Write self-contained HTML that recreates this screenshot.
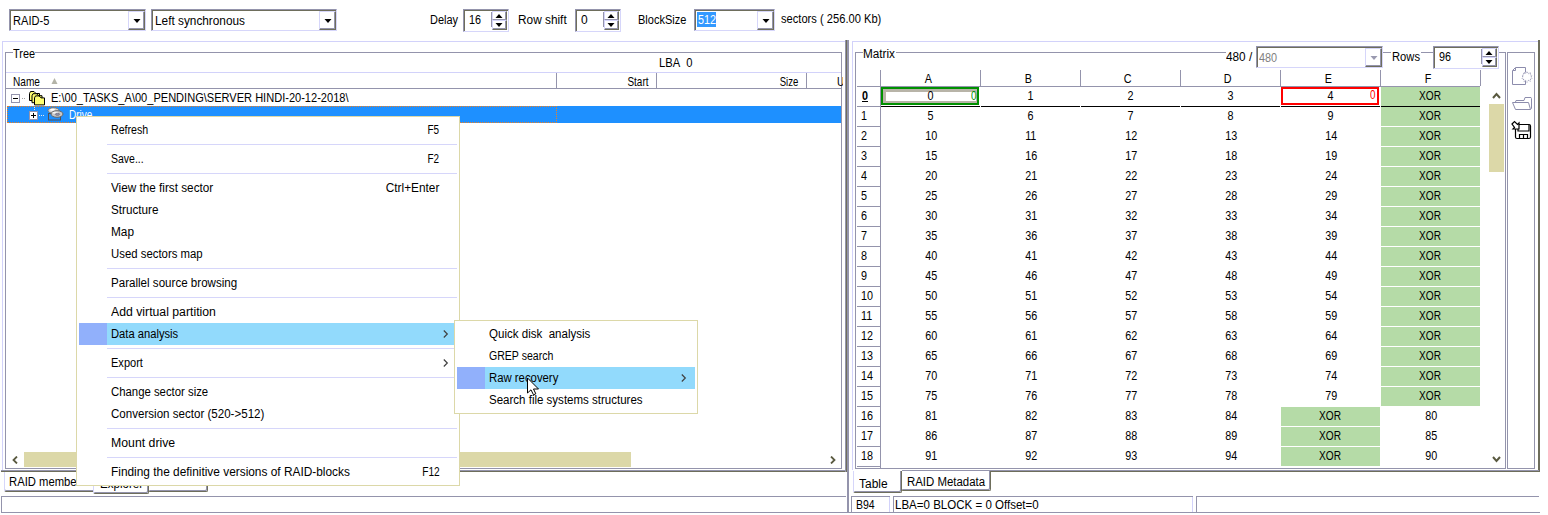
<!DOCTYPE html><html><head><meta charset="utf-8"><title>RAID</title><style>
*{box-sizing:border-box;margin:0;padding:0}
html,body{width:1548px;height:515px;overflow:hidden;background:#fff}
body{position:relative;font-family:"Liberation Sans",sans-serif;font-size:12px;color:#000}
.a{position:absolute}
.t{position:absolute;white-space:nowrap;line-height:16px;height:16px;font-size:12px}
.sm{font-size:13px}
.sunk{position:absolute;background:#fff;border-style:solid;border-width:1px;border-color:#9494ac #d6d6fa #d6d6fa #9494ac;box-shadow:inset 1px 1px 0 #6e6e5c}
.btn{position:absolute;background:#fff;border-style:solid;border-width:1px;border-color:#d6d6fa #6e6e5c #6e6e5c #d6d6fa;box-shadow:inset -1px -1px 0 #9494ac}
.lav{background:#d2d2fa}
.gry{background:#9494ac}
.dk{background:#6e6e5c}
.xor{background:#b5dba7}
.mi{position:absolute;white-space:nowrap;font-size:12px;line-height:22px;height:22px}
.sep{position:absolute;height:1px;background:#d6d6fa}
.c{position:absolute;width:100px;height:20px;line-height:19px;text-align:center;font-size:13px;padding-left:2px}
.c i,.rh i{font-style:normal;display:inline-block;transform:scaleX(.83)}
.rh i{transform-origin:left center}
.rh{position:absolute;left:857px;width:23px;height:20px;line-height:19px;font-size:13px;padding-left:4px}
</style></head><body>
<div class="sunk" style="left:9px;top:9px;width:137px;height:22px"></div>
<div class="btn" style="left:128px;top:11px;width:17px;height:19px"></div>
<svg class="a" style="left:132.5px;top:19px" width="8" height="4"><polygon points="0.5,0 7.5,0 4,4" fill="#000"/></svg>
<div class="t " style="left:13px;top:13px;"><span style="display:inline-block;transform-origin:left center;transform:scaleX(0.9226)">RAID-5</span></div>
<div class="sunk" style="left:151px;top:9px;width:186px;height:22px"></div>
<div class="btn" style="left:319px;top:11px;width:17px;height:19px"></div>
<svg class="a" style="left:323.5px;top:19px" width="8" height="4"><polygon points="0.5,0 7.5,0 4,4" fill="#000"/></svg>
<div class="t " style="left:155px;top:13px;"><span style="display:inline-block;transform-origin:left center;transform:scaleX(0.9848)">Left synchronous</span></div>
<div class="t " style="left:430px;top:12px;"><span style="display:inline-block;transform-origin:left center;transform:scaleX(0.9124)">Delay</span></div>
<div class="sunk" style="left:463px;top:9px;width:46px;height:23px"></div>
<div class="a gry" style="left:491px;top:12px;width:1px;height:15px;"></div>
<div class="btn" style="left:492px;top:11px;width:15px;height:9px;border-bottom-color:#9494ac;box-shadow:inset -1px 0 0 #9494ac"></div>
<div class="btn" style="left:492px;top:20px;width:15px;height:10px"></div>
<svg class="a" style="left:495px;top:14px" width="8" height="4"><polygon points="0.5,4 7.5,4 4,0" fill="#000"/></svg>
<svg class="a" style="left:495px;top:23px" width="8" height="4"><polygon points="0.5,0 7.5,0 4,4" fill="#000"/></svg>
<div class="t " style="left:469px;top:12px;"><span style="display:inline-block;transform-origin:left center;transform:scaleX(0.8982)">16</span></div>
<div class="t " style="left:518px;top:12px;"><span style="display:inline-block;transform-origin:left center;transform:scaleX(0.9866)">Row shift</span></div>
<div class="sunk" style="left:575px;top:9px;width:46px;height:23px"></div>
<div class="a gry" style="left:603px;top:12px;width:1px;height:15px;"></div>
<div class="btn" style="left:604px;top:11px;width:15px;height:9px;border-bottom-color:#9494ac;box-shadow:inset -1px 0 0 #9494ac"></div>
<div class="btn" style="left:604px;top:20px;width:15px;height:10px"></div>
<svg class="a" style="left:607px;top:14px" width="8" height="4"><polygon points="0.5,4 7.5,4 4,0" fill="#000"/></svg>
<svg class="a" style="left:607px;top:23px" width="8" height="4"><polygon points="0.5,0 7.5,0 4,4" fill="#000"/></svg>
<div class="t " style="left:581px;top:12px;">0</div>
<div class="t " style="left:638px;top:12px;"><span style="display:inline-block;transform-origin:left center;transform:scaleX(0.9167)">BlockSize</span></div>
<div class="sunk" style="left:694px;top:9px;width:81px;height:22px"></div>
<div class="btn" style="left:757px;top:11px;width:17px;height:19px"></div>
<svg class="a" style="left:761.5px;top:19px" width="8" height="4"><polygon points="0.5,0 7.5,0 4,4" fill="#000"/></svg>
<div class="a " style="left:697px;top:12px;width:19px;height:15px;background:#3399ff"></div>
<div class="t " style="left:698px;top:12px;color:#fff"><span style="display:inline-block;transform-origin:left center;transform:scaleX(0.8986)">512</span></div>
<div class="t " style="left:781px;top:11px;"><span style="display:inline-block;transform-origin:left center;transform:scaleX(0.9282)">sectors ( 256.00 Kb)</span></div>
<div class="a lav" style="left:2px;top:41px;width:843px;height:1px;"></div>
<div class="a lav" style="left:2px;top:41px;width:1px;height:430px;"></div>
<div class="a gry" style="left:5px;top:52px;width:837px;height:1px;"></div>
<div class="a gry" style="left:5px;top:52px;width:1px;height:417px;"></div>
<div class="a gry" style="left:841px;top:52px;width:1px;height:417px;"></div>
<div class="a gry" style="left:5px;top:468px;width:837px;height:1px;"></div>
<div class="a " style="left:13px;top:52px;width:22px;height:1px;background:#fff"></div>
<div class="t " style="left:13px;top:46px;"><span style="display:inline-block;transform-origin:left center;transform:scaleX(0.9078)">Tree</span></div>
<div class="t " style="left:659px;top:55px;"><span style="display:inline-block;transform-origin:left center;transform:scaleX(0.9325)">LBA&nbsp; 0</span></div>
<div class="a lav" style="left:6px;top:72px;width:835px;height:1px;"></div>
<div class="a gry" style="left:6px;top:88px;width:835px;height:1px;"></div>
<div class="a gry" style="left:556px;top:73px;width:1px;height:15px;"></div>
<div class="a gry" style="left:656px;top:73px;width:1px;height:15px;"></div>
<div class="a gry" style="left:806px;top:73px;width:1px;height:15px;"></div>
<div class="t sm" style="left:13px;top:74px;"><span style="display:inline-block;transform-origin:left center;transform:scaleX(0.7784)">Name</span></div>
<svg class="a" style="left:51px;top:78px" width="7" height="6"><polygon points="0.5,6 3.5,0 6.5,6" fill="#b4b4a8"/></svg>
<div class="t sm" style="right:900px;top:74px;"><span style="display:inline-block;transform-origin:right center;transform:scaleX(0.7645)">Start</span></div>
<div class="t sm" style="right:750px;top:74px;"><span style="display:inline-block;transform-origin:right center;transform:scaleX(0.7353)">Size</span></div>
<div class="t sm" style="left:836.5px;top:74px;width:6px;overflow:hidden"><i style="font-style:normal;display:inline-block;transform:scaleX(.8);transform-origin:left center">U</i></div>
<svg class="a" style="left:11px;top:94px" width="15" height="9"><rect x="0.5" y="0.5" width="8" height="8" fill="#fff" stroke="#9494ac"/><rect x="2" y="4" width="5" height="1" fill="#000"/><rect x="11" y="4" width="1" height="1" fill="#a0a0a0"/><rect x="13" y="4" width="1" height="1" fill="#a0a0a0"/></svg>
<svg class="a" style="left:29px;top:91px" width="17" height="15" viewBox="0 0 17 15"><path d="M0.5 2.5L1.5 0.5H5.0L7.0 2.5H10.5V9.5H0.5Z" fill="#ffff70" stroke="#000"/><path d="M3.0 4.7L4.0 2.7H7.5L9.5 4.7H13.0V11.7H3.0Z" fill="#ffff70" stroke="#000"/><path d="M5.5 6.9L6.5 4.9H10.0L12.0 6.9H15.5V13.9H5.5Z" fill="#ffff70" stroke="#000"/></svg>
<div class="t sm" style="left:51px;top:90px;"><span style="display:inline-block;transform-origin:left center;transform:scaleX(0.8501)">E:\00_TASKS_A\00_PENDING\SERVER HINDI-20-12-2018\</span></div>
<div class="a " style="left:7px;top:106px;width:834px;height:17px;background:#1e90ff"></div>
<div class="a " style="left:7px;top:106px;width:550px;height:17px;border:1px dotted #f08020"></div>
<svg class="a" style="left:29px;top:107px" width="16" height="13"><rect x="5" y="0" width="1" height="1" fill="#e8e8e8"/><rect x="5" y="2" width="1" height="1" fill="#e8e8e8"/><rect x="0.500" y="4.500" width="8" height="8" fill="#fff" stroke="#9494ac"/><rect x="2" y="8" width="5" height="1" fill="#000"/><rect x="4" y="6" width="1" height="5" fill="#000"/><rect x="10" y="8" width="1" height="1" fill="#e8e8e8"/><rect x="12" y="8" width="1" height="1" fill="#e8e8e8"/><rect x="14" y="8" width="1" height="1" fill="#e8e8e8"/></svg>
<svg class="a" style="left:47px;top:107px" width="17" height="14" viewBox="0 0 17 14"><rect x="1.500" y="6.500" width="12" height="6.500" fill="none" stroke="#505058"/><ellipse cx="6.500" cy="3.500" rx="5.500" ry="2.800" fill="#d4d4d4" stroke="#787878"/><ellipse cx="5.500" cy="2.800" rx="2.500" ry="1" fill="#fff"/><ellipse cx="10" cy="7" rx="6" ry="3.300" fill="#c8c8c8" stroke="#686868"/><ellipse cx="8.500" cy="5.800" rx="3" ry="1" fill="#f4f4f4"/><ellipse cx="10.500" cy="7.300" rx="2.200" ry="1.100" fill="#9090a8" stroke="#606070" stroke-width="0.600"/></svg>
<div class="t sm" style="left:69px;top:107px;color:#fff"><span style="display:inline-block;transform-origin:left center;transform:scaleX(0.7679)">Drive</span></div>
<div class="a " style="left:24px;top:452px;width:607px;height:15px;background:#dcd8a8"></div>
<svg class="a" style="left:11px;top:456px" width="8" height="8"><path d="M6 0.500L2.500 4L6 7.500" fill="none" stroke="#5a5a40" stroke-width="1.800"/></svg>
<svg class="a" style="left:829px;top:456px" width="8" height="8"><path d="M2 0.500L5.500 4L2 7.500" fill="none" stroke="#5a5a40" stroke-width="1.800"/></svg>
<div class="a gry" style="left:1px;top:470px;width:846px;height:1px;"></div>
<div class="a dk" style="left:1px;top:471px;width:846px;height:1px;"></div>
<div class="a" style="left:4px;top:472px;width:89px;height:20px;background:#fff;border-style:solid;border-color:#d6d6fa #6e6e5c #6e6e5c #d6d6fa;border-width:0 0px 1px 1px;box-shadow:inset 0px -1px 0 #9494ac;border-radius:0 0 0px 2px"></div>
<div class="t " style="left:9px;top:474px;"><span style="display:inline-block;transform-origin:left center;transform:scaleX(0.9388)">RAID members</span></div>
<div class="a" style="left:148px;top:472px;width:60px;height:20px;background:#fff;border-style:solid;border-color:#d6d6fa #6e6e5c #6e6e5c #d6d6fa;border-width:0 1px 1px 1px;box-shadow:inset -1px -1px 0 #9494ac;border-radius:0 0 2px 2px"></div>
<div class="a" style="left:93px;top:472px;width:56px;height:22px;background:#fff;border-style:solid;border-color:#d6d6fa #6e6e5c #6e6e5c #d6d6fa;border-width:0 1px 1px 1px;box-shadow:inset -1px -1px 0 #9494ac;border-radius:0 0 2px 2px"></div>
<div class="t " style="left:100px;top:476px;"><span style="display:inline-block;transform-origin:left center;transform:scaleX(0.9622)">Explorer</span></div>
<div class="a gry" style="left:1px;top:496px;width:845px;height:1px;"></div>
<div class="a gry" style="left:1px;top:496px;width:1px;height:17px;"></div>
<div class="a gry" style="left:1px;top:512px;width:848px;height:1px;"></div>
<div class="a gry" style="left:845px;top:40px;width:1px;height:432px;"></div>
<div class="a dk" style="left:846px;top:40px;width:1px;height:432px;"></div>
<div class="a gry" style="left:847px;top:40px;width:2px;height:473px;"></div>
<div class="a lav" style="left:852px;top:41px;width:687px;height:1px;"></div>
<div class="a lav" style="left:852px;top:41px;width:1px;height:429px;"></div>
<div class="a dk" style="left:1538px;top:40px;width:2px;height:432px;"></div>
<div class="a gry" style="left:855px;top:52px;width:651px;height:1px;"></div>
<div class="a gry" style="left:855px;top:52px;width:1px;height:417px;"></div>
<div class="a gry" style="left:1505px;top:52px;width:1px;height:417px;"></div>
<div class="a gry" style="left:855px;top:468px;width:651px;height:1px;"></div>
<div class="a " style="left:863px;top:52px;width:33px;height:1px;background:#fff"></div>
<div class="t " style="left:863px;top:46px;"><span style="display:inline-block;transform-origin:left center;transform:scaleX(0.9794)">Matrix</span></div>
<div class="a gry" style="left:1507px;top:52px;width:28px;height:1px;"></div>
<div class="a gry" style="left:1507px;top:52px;width:1px;height:417px;"></div>
<div class="a gry" style="left:1534px;top:52px;width:1px;height:417px;"></div>
<div class="a gry" style="left:1507px;top:468px;width:28px;height:1px;"></div>
<div class="a " style="left:1226px;top:52px;width:30px;height:1px;background:#fff"></div>
<div class="t " style="left:1226px;top:49px;"><span style="display:inline-block;transform-origin:left center;transform:scaleX(0.9812)">480 /</span></div>
<div class="sunk" style="left:1256px;top:46px;width:127px;height:22px"></div>
<div class="btn" style="left:1365px;top:48px;width:17px;height:19px"></div>
<svg class="a" style="left:1369.5px;top:56px" width="8" height="4"><polygon points="0.5,0 7.5,0 4,4" fill="#9a9ab0"/></svg>
<div class="t " style="left:1259px;top:50px;color:#808080"><span style="display:inline-block;transform-origin:left center;transform:scaleX(0.9036)">480</span></div>
<div class="a " style="left:1391px;top:52px;width:30px;height:1px;background:#fff"></div>
<div class="t " style="left:1392px;top:49px;"><span style="display:inline-block;transform-origin:left center;transform:scaleX(0.9328)">Rows</span></div>
<div class="sunk" style="left:1433px;top:46px;width:66px;height:23px"></div>
<div class="a gry" style="left:1481px;top:49px;width:1px;height:15px;"></div>
<div class="btn" style="left:1482px;top:48px;width:15px;height:9px;border-bottom-color:#9494ac;box-shadow:inset -1px 0 0 #9494ac"></div>
<div class="btn" style="left:1482px;top:57px;width:15px;height:10px"></div>
<svg class="a" style="left:1485px;top:51px" width="8" height="4"><polygon points="0.5,4 7.5,4 4,0" fill="#000"/></svg>
<svg class="a" style="left:1485px;top:60px" width="8" height="4"><polygon points="0.5,0 7.5,0 4,4" fill="#000"/></svg>
<div class="t " style="left:1439px;top:49px;"><span style="display:inline-block;transform-origin:left center;transform:scaleX(0.8982)">96</span></div>
<div class="a gry" style="left:880px;top:70px;width:1px;height:16px;"></div>
<div class="c" style="left:880px;top:70px;height:16px;line-height:18px;padding:0 4px 0 0"><i>A</i></div>
<div class="a gry" style="left:980px;top:70px;width:1px;height:16px;"></div>
<div class="c" style="left:980px;top:70px;height:16px;line-height:18px;padding:0 4px 0 0"><i>B</i></div>
<div class="a gry" style="left:1080px;top:70px;width:1px;height:16px;"></div>
<div class="c" style="left:1080px;top:70px;height:16px;line-height:18px;padding:0 4px 0 0"><i>C</i></div>
<div class="a gry" style="left:1180px;top:70px;width:1px;height:16px;"></div>
<div class="c" style="left:1180px;top:70px;height:16px;line-height:18px;padding:0 4px 0 0"><i>D</i></div>
<div class="a gry" style="left:1280px;top:70px;width:1px;height:16px;"></div>
<div class="c" style="left:1280px;top:70px;height:16px;line-height:18px;padding:0 4px 0 0"><i>E</i></div>
<div class="a gry" style="left:1380px;top:70px;width:1px;height:16px;"></div>
<div class="c" style="left:1380px;top:70px;height:16px;line-height:18px;padding:0 4px 0 0"><i>F</i></div>
<div class="a gry" style="left:1480px;top:70px;width:1px;height:16px;"></div>
<div class="a gry" style="left:857px;top:86px;width:623px;height:1px;"></div>
<div class="a gry" style="left:880px;top:86px;width:1px;height:382px;"></div>
<div class="rh" style="top:86px"><b><i style="text-decoration:underline;margin-left:1px">0</i></b></div>
<div class="a gry" style="left:857px;top:106px;width:23px;height:1px;"></div>
<div class="c" style="left:880px;top:86px"><i>0</i></div>
<div class="c" style="left:980px;top:86px"><i>1</i></div>
<div class="c" style="left:1080px;top:86px"><i>2</i></div>
<div class="c" style="left:1180px;top:86px"><i>3</i></div>
<div class="c" style="left:1280px;top:86px"><i>4</i></div>
<div class="c xor" style="left:1381px;top:87px;width:99px;padding:0 1px 0 0;height:19px;line-height:18px"><span style="display:inline-block;transform-origin:center center;transform:scaleX(0.7809)">XOR</span></div>
<div class="rh" style="top:106px"><i>1</i></div>
<div class="a gry" style="left:857px;top:126px;width:23px;height:1px;"></div>
<div class="c" style="left:880px;top:106px"><i>5</i></div>
<div class="c" style="left:980px;top:106px"><i>6</i></div>
<div class="c" style="left:1080px;top:106px"><i>7</i></div>
<div class="c" style="left:1180px;top:106px"><i>8</i></div>
<div class="c" style="left:1280px;top:106px"><i>9</i></div>
<div class="c xor" style="left:1381px;top:107px;width:99px;padding:0 1px 0 0;height:19px;line-height:18px"><span style="display:inline-block;transform-origin:center center;transform:scaleX(0.7809)">XOR</span></div>
<div class="rh" style="top:126px"><i>2</i></div>
<div class="a gry" style="left:857px;top:146px;width:23px;height:1px;"></div>
<div class="c" style="left:880px;top:126px"><i>10</i></div>
<div class="c" style="left:980px;top:126px"><i>11</i></div>
<div class="c" style="left:1080px;top:126px"><i>12</i></div>
<div class="c" style="left:1180px;top:126px"><i>13</i></div>
<div class="c" style="left:1280px;top:126px"><i>14</i></div>
<div class="c xor" style="left:1381px;top:127px;width:99px;padding:0 1px 0 0;height:19px;line-height:18px"><span style="display:inline-block;transform-origin:center center;transform:scaleX(0.7809)">XOR</span></div>
<div class="rh" style="top:146px"><i>3</i></div>
<div class="a gry" style="left:857px;top:166px;width:23px;height:1px;"></div>
<div class="c" style="left:880px;top:146px"><i>15</i></div>
<div class="c" style="left:980px;top:146px"><i>16</i></div>
<div class="c" style="left:1080px;top:146px"><i>17</i></div>
<div class="c" style="left:1180px;top:146px"><i>18</i></div>
<div class="c" style="left:1280px;top:146px"><i>19</i></div>
<div class="c xor" style="left:1381px;top:147px;width:99px;padding:0 1px 0 0;height:19px;line-height:18px"><span style="display:inline-block;transform-origin:center center;transform:scaleX(0.7809)">XOR</span></div>
<div class="rh" style="top:166px"><i>4</i></div>
<div class="a gry" style="left:857px;top:186px;width:23px;height:1px;"></div>
<div class="c" style="left:880px;top:166px"><i>20</i></div>
<div class="c" style="left:980px;top:166px"><i>21</i></div>
<div class="c" style="left:1080px;top:166px"><i>22</i></div>
<div class="c" style="left:1180px;top:166px"><i>23</i></div>
<div class="c" style="left:1280px;top:166px"><i>24</i></div>
<div class="c xor" style="left:1381px;top:167px;width:99px;padding:0 1px 0 0;height:19px;line-height:18px"><span style="display:inline-block;transform-origin:center center;transform:scaleX(0.7809)">XOR</span></div>
<div class="rh" style="top:186px"><i>5</i></div>
<div class="a gry" style="left:857px;top:206px;width:23px;height:1px;"></div>
<div class="c" style="left:880px;top:186px"><i>25</i></div>
<div class="c" style="left:980px;top:186px"><i>26</i></div>
<div class="c" style="left:1080px;top:186px"><i>27</i></div>
<div class="c" style="left:1180px;top:186px"><i>28</i></div>
<div class="c" style="left:1280px;top:186px"><i>29</i></div>
<div class="c xor" style="left:1381px;top:187px;width:99px;padding:0 1px 0 0;height:19px;line-height:18px"><span style="display:inline-block;transform-origin:center center;transform:scaleX(0.7809)">XOR</span></div>
<div class="rh" style="top:206px"><i>6</i></div>
<div class="a gry" style="left:857px;top:226px;width:23px;height:1px;"></div>
<div class="c" style="left:880px;top:206px"><i>30</i></div>
<div class="c" style="left:980px;top:206px"><i>31</i></div>
<div class="c" style="left:1080px;top:206px"><i>32</i></div>
<div class="c" style="left:1180px;top:206px"><i>33</i></div>
<div class="c" style="left:1280px;top:206px"><i>34</i></div>
<div class="c xor" style="left:1381px;top:207px;width:99px;padding:0 1px 0 0;height:19px;line-height:18px"><span style="display:inline-block;transform-origin:center center;transform:scaleX(0.7809)">XOR</span></div>
<div class="rh" style="top:226px"><i>7</i></div>
<div class="a gry" style="left:857px;top:246px;width:23px;height:1px;"></div>
<div class="c" style="left:880px;top:226px"><i>35</i></div>
<div class="c" style="left:980px;top:226px"><i>36</i></div>
<div class="c" style="left:1080px;top:226px"><i>37</i></div>
<div class="c" style="left:1180px;top:226px"><i>38</i></div>
<div class="c" style="left:1280px;top:226px"><i>39</i></div>
<div class="c xor" style="left:1381px;top:227px;width:99px;padding:0 1px 0 0;height:19px;line-height:18px"><span style="display:inline-block;transform-origin:center center;transform:scaleX(0.7809)">XOR</span></div>
<div class="rh" style="top:246px"><i>8</i></div>
<div class="a gry" style="left:857px;top:266px;width:23px;height:1px;"></div>
<div class="c" style="left:880px;top:246px"><i>40</i></div>
<div class="c" style="left:980px;top:246px"><i>41</i></div>
<div class="c" style="left:1080px;top:246px"><i>42</i></div>
<div class="c" style="left:1180px;top:246px"><i>43</i></div>
<div class="c" style="left:1280px;top:246px"><i>44</i></div>
<div class="c xor" style="left:1381px;top:247px;width:99px;padding:0 1px 0 0;height:19px;line-height:18px"><span style="display:inline-block;transform-origin:center center;transform:scaleX(0.7809)">XOR</span></div>
<div class="rh" style="top:266px"><i>9</i></div>
<div class="a gry" style="left:857px;top:286px;width:23px;height:1px;"></div>
<div class="c" style="left:880px;top:266px"><i>45</i></div>
<div class="c" style="left:980px;top:266px"><i>46</i></div>
<div class="c" style="left:1080px;top:266px"><i>47</i></div>
<div class="c" style="left:1180px;top:266px"><i>48</i></div>
<div class="c" style="left:1280px;top:266px"><i>49</i></div>
<div class="c xor" style="left:1381px;top:267px;width:99px;padding:0 1px 0 0;height:19px;line-height:18px"><span style="display:inline-block;transform-origin:center center;transform:scaleX(0.7809)">XOR</span></div>
<div class="rh" style="top:286px"><i>10</i></div>
<div class="a gry" style="left:857px;top:306px;width:23px;height:1px;"></div>
<div class="c" style="left:880px;top:286px"><i>50</i></div>
<div class="c" style="left:980px;top:286px"><i>51</i></div>
<div class="c" style="left:1080px;top:286px"><i>52</i></div>
<div class="c" style="left:1180px;top:286px"><i>53</i></div>
<div class="c" style="left:1280px;top:286px"><i>54</i></div>
<div class="c xor" style="left:1381px;top:287px;width:99px;padding:0 1px 0 0;height:19px;line-height:18px"><span style="display:inline-block;transform-origin:center center;transform:scaleX(0.7809)">XOR</span></div>
<div class="rh" style="top:306px"><i>11</i></div>
<div class="a gry" style="left:857px;top:326px;width:23px;height:1px;"></div>
<div class="c" style="left:880px;top:306px"><i>55</i></div>
<div class="c" style="left:980px;top:306px"><i>56</i></div>
<div class="c" style="left:1080px;top:306px"><i>57</i></div>
<div class="c" style="left:1180px;top:306px"><i>58</i></div>
<div class="c" style="left:1280px;top:306px"><i>59</i></div>
<div class="c xor" style="left:1381px;top:307px;width:99px;padding:0 1px 0 0;height:19px;line-height:18px"><span style="display:inline-block;transform-origin:center center;transform:scaleX(0.7809)">XOR</span></div>
<div class="rh" style="top:326px"><i>12</i></div>
<div class="a gry" style="left:857px;top:346px;width:23px;height:1px;"></div>
<div class="c" style="left:880px;top:326px"><i>60</i></div>
<div class="c" style="left:980px;top:326px"><i>61</i></div>
<div class="c" style="left:1080px;top:326px"><i>62</i></div>
<div class="c" style="left:1180px;top:326px"><i>63</i></div>
<div class="c" style="left:1280px;top:326px"><i>64</i></div>
<div class="c xor" style="left:1381px;top:327px;width:99px;padding:0 1px 0 0;height:19px;line-height:18px"><span style="display:inline-block;transform-origin:center center;transform:scaleX(0.7809)">XOR</span></div>
<div class="rh" style="top:346px"><i>13</i></div>
<div class="a gry" style="left:857px;top:366px;width:23px;height:1px;"></div>
<div class="c" style="left:880px;top:346px"><i>65</i></div>
<div class="c" style="left:980px;top:346px"><i>66</i></div>
<div class="c" style="left:1080px;top:346px"><i>67</i></div>
<div class="c" style="left:1180px;top:346px"><i>68</i></div>
<div class="c" style="left:1280px;top:346px"><i>69</i></div>
<div class="c xor" style="left:1381px;top:347px;width:99px;padding:0 1px 0 0;height:19px;line-height:18px"><span style="display:inline-block;transform-origin:center center;transform:scaleX(0.7809)">XOR</span></div>
<div class="rh" style="top:366px"><i>14</i></div>
<div class="a gry" style="left:857px;top:386px;width:23px;height:1px;"></div>
<div class="c" style="left:880px;top:366px"><i>70</i></div>
<div class="c" style="left:980px;top:366px"><i>71</i></div>
<div class="c" style="left:1080px;top:366px"><i>72</i></div>
<div class="c" style="left:1180px;top:366px"><i>73</i></div>
<div class="c" style="left:1280px;top:366px"><i>74</i></div>
<div class="c xor" style="left:1381px;top:367px;width:99px;padding:0 1px 0 0;height:19px;line-height:18px"><span style="display:inline-block;transform-origin:center center;transform:scaleX(0.7809)">XOR</span></div>
<div class="rh" style="top:386px"><i>15</i></div>
<div class="a gry" style="left:857px;top:406px;width:23px;height:1px;"></div>
<div class="c" style="left:880px;top:386px"><i>75</i></div>
<div class="c" style="left:980px;top:386px"><i>76</i></div>
<div class="c" style="left:1080px;top:386px"><i>77</i></div>
<div class="c" style="left:1180px;top:386px"><i>78</i></div>
<div class="c" style="left:1280px;top:386px"><i>79</i></div>
<div class="c xor" style="left:1381px;top:387px;width:99px;padding:0 1px 0 0;height:19px;line-height:18px"><span style="display:inline-block;transform-origin:center center;transform:scaleX(0.7809)">XOR</span></div>
<div class="rh" style="top:406px"><i>16</i></div>
<div class="a gry" style="left:857px;top:426px;width:23px;height:1px;"></div>
<div class="c" style="left:1380px;top:406px"><i>80</i></div>
<div class="c" style="left:880px;top:406px"><i>81</i></div>
<div class="c" style="left:980px;top:406px"><i>82</i></div>
<div class="c" style="left:1080px;top:406px"><i>83</i></div>
<div class="c" style="left:1180px;top:406px"><i>84</i></div>
<div class="c xor" style="left:1281px;top:407px;width:99px;padding:0 1px 0 0;height:19px;line-height:18px"><span style="display:inline-block;transform-origin:center center;transform:scaleX(0.7809)">XOR</span></div>
<div class="rh" style="top:426px"><i>17</i></div>
<div class="a gry" style="left:857px;top:446px;width:23px;height:1px;"></div>
<div class="c" style="left:1380px;top:426px"><i>85</i></div>
<div class="c" style="left:880px;top:426px"><i>86</i></div>
<div class="c" style="left:980px;top:426px"><i>87</i></div>
<div class="c" style="left:1080px;top:426px"><i>88</i></div>
<div class="c" style="left:1180px;top:426px"><i>89</i></div>
<div class="c xor" style="left:1281px;top:427px;width:99px;padding:0 1px 0 0;height:19px;line-height:18px"><span style="display:inline-block;transform-origin:center center;transform:scaleX(0.7809)">XOR</span></div>
<div class="rh" style="top:446px"><i>18</i></div>
<div class="a gry" style="left:857px;top:466px;width:23px;height:1px;"></div>
<div class="c" style="left:1380px;top:446px"><i>90</i></div>
<div class="c" style="left:880px;top:446px"><i>91</i></div>
<div class="c" style="left:980px;top:446px"><i>92</i></div>
<div class="c" style="left:1080px;top:446px"><i>93</i></div>
<div class="c" style="left:1180px;top:446px"><i>94</i></div>
<div class="c xor" style="left:1281px;top:447px;width:99px;padding:0 1px 0 0;height:19px;line-height:18px"><span style="display:inline-block;transform-origin:center center;transform:scaleX(0.7809)">XOR</span></div>
<div class="a " style="left:881px;top:106px;width:99px;height:1px;background:#000"></div>
<div class="a " style="left:981px;top:106px;width:99px;height:1px;background:#000"></div>
<div class="a " style="left:1081px;top:106px;width:99px;height:1px;background:#000"></div>
<div class="a " style="left:1181px;top:106px;width:99px;height:1px;background:#000"></div>
<div class="a " style="left:1281px;top:106px;width:99px;height:1px;background:#000"></div>
<div class="a " style="left:1381px;top:106px;width:99px;height:1px;background:#000"></div>
<div class="a " style="left:881px;top:87px;width:98px;height:18px;border:2px solid #009000;background:#fff"></div>
<div class="a " style="left:883px;top:89px;width:94px;height:14px;border-style:solid;border-color:#b8b4a8;border-width:3px 1px 2px 3px"></div>
<div class="c" style="left:880px;top:86px"><i>0</i></div>
<div class="t sm" style="left:971px;top:88px;color:#009000"><span style="display:inline-block;transform-origin:left center;transform:scaleX(0.7603)">0</span></div>
<div class="a " style="left:1281px;top:87px;width:98px;height:18px;border:2px solid #f00;background:#fff"></div>
<div class="c" style="left:1280px;top:86px"><i>4</i></div>
<div class="t sm" style="left:1370px;top:87px;color:#f00"><span style="display:inline-block;transform-origin:left center;transform:scaleX(0.7603)">0</span></div>
<div class="a " style="left:1489px;top:104px;width:15px;height:68px;background:#dcd8a8"></div>
<svg class="a" style="left:1492px;top:92px" width="9" height="7"><path d="M1 6L4.500 2L8 6" fill="none" stroke="#5a5a40" stroke-width="2"/></svg>
<svg class="a" style="left:1492px;top:456px" width="9" height="7"><path d="M1 1L4.500 5L8 1" fill="none" stroke="#5a5a40" stroke-width="2"/></svg>
<div class="a gry" style="left:902px;top:470px;width:637px;height:1px;"></div>
<div class="a dk" style="left:902px;top:471px;width:637px;height:1px;"></div>
<svg class="a" style="left:1511px;top:66px" width="23" height="20" viewBox="0 0 23 20" fill="none" stroke="#8c8cac"><path d="M4.500 1.500H14.500V6.500M14.500 15V18.500H1.500V4.500L4.500 1.500M2 4.500H4.500V2"/><path d="M13 6.500l1.500 1.200 1.500-2 1.500 2 1.800-1 .2 2.300 1.500 .5-1 1.500 1 1.500-1.500 .5-.2 2.300-1.800-1-1.500 2-1.500-2-1.500 1.200-.5-2.500-1.500-.5 1-1.500-1-1.500 1.500-.5z" stroke-width="0.900" stroke-dasharray="1.300 0.900"/></svg>
<svg class="a" style="left:1511px;top:96px" width="23" height="15" viewBox="0 0 23 15" fill="none" stroke="#8c8cac"><path d="M1.500 6.500H17.500L19.500 13.500H4.500Z"/><path d="M4.500 6L5 4.500H13L14 1.500H20L20.500 2.500V12.500L19.500 13.500"/></svg>
<svg class="a" style="left:1511px;top:120px" width="23" height="20" viewBox="0 0 23 20" fill="none" stroke="#000" stroke-width="1.200"><rect x="4.500" y="4.500" width="15" height="14" rx="1.500"/><path d="M7 4.500V11H18V4.500"/><path d="M8.500 18.500V14.500H16.500V18.500M12.500 14.500V18.500"/><path d="M1 4L3.500 1.500L6.500 4.500L8 3V9H2L3.500 7.500Z" fill="#fff"/></svg>
<div class="a" style="left:901px;top:471px;width:90px;height:20px;background:#fff;border-style:solid;border-color:#d6d6fa #6e6e5c #6e6e5c #6e6e5c;border-width:0 1px 1px 1px;box-shadow:inset -1px -1px 0 #9494ac;border-radius:0 0 2px 2px"></div>
<div class="t " style="left:907px;top:474px;"><span style="display:inline-block;transform-origin:left center;transform:scaleX(0.9519)">RAID Metadata</span></div>
<div class="a" style="left:853px;top:471px;width:49px;height:22px;background:#fff;border-style:solid;border-color:#d6d6fa #6e6e5c #6e6e5c #d6d6fa;border-width:0 1px 1px 1px;box-shadow:inset -1px -1px 0 #9494ac;border-radius:0 0 2px 2px"></div>
<div class="t " style="left:859px;top:476px;"><span style="display:inline-block;transform-origin:left center;transform:scaleX(0.9969)">Table</span></div>
<div class="a gry" style="left:851px;top:496px;width:688px;height:1px;"></div>
<div class="a gry" style="left:851px;top:496px;width:1px;height:17px;"></div>
<div class="a gry" style="left:849px;top:512px;width:691px;height:1px;"></div>
<div class="a lav" style="left:889px;top:497px;width:1px;height:15px;"></div>
<div class="a " style="left:890px;top:496px;width:3px;height:1px;background:#fff"></div>
<div class="a gry" style="left:893px;top:497px;width:1px;height:15px;"></div>
<div class="a lav" style="left:1192px;top:497px;width:1px;height:15px;"></div>
<div class="a " style="left:1193px;top:496px;width:3px;height:1px;background:#fff"></div>
<div class="a gry" style="left:1196px;top:497px;width:1px;height:15px;"></div>
<div class="t " style="left:856px;top:497px;"><span style="display:inline-block;transform-origin:left center;transform:scaleX(0.8755)">B94</span></div>
<div class="t " style="left:895px;top:497px;"><span style="display:inline-block;transform-origin:left center;transform:scaleX(0.9609)">LBA=0 BLOCK = 0 Offset=0</span></div>
<div class="a" style="left:76px;top:116px;width:384px;height:370px;background:#fff;border:1px solid #dcd8a8"></div>
<div class="mi" style="left:111px;top:119px"><span style="display:inline-block;transform-origin:left center;transform:scaleX(0.8874)">Refresh</span></div>
<div class="mi" style="right:1108.5px;top:119px"><span style="display:inline-block;transform-origin:right center;transform:scaleX(0.8276)">F5</span></div>
<div class="sep" style="left:107px;top:144px;width:350px"></div>
<div class="mi" style="left:111px;top:148px"><span style="display:inline-block;transform-origin:left center;transform:scaleX(0.8753)">Save...</span></div>
<div class="mi" style="right:1108.5px;top:148px"><span style="display:inline-block;transform-origin:right center;transform:scaleX(0.8276)">F2</span></div>
<div class="sep" style="left:107px;top:173px;width:350px"></div>
<div class="mi" style="left:111px;top:177px"><span style="display:inline-block;transform-origin:left center;transform:scaleX(0.9781)">View the first sector</span></div>
<div class="mi" style="right:1108.5px;top:177px"><span style="display:inline-block;transform-origin:right center;transform:scaleX(0.9860)">Ctrl+Enter</span></div>
<div class="mi" style="left:111px;top:199px"><span style="display:inline-block;transform-origin:left center;transform:scaleX(0.9736)">Structure</span></div>
<div class="mi" style="left:111px;top:221px"><span style="display:inline-block;transform-origin:left center;transform:scaleX(0.9853)">Map</span></div>
<div class="mi" style="left:111px;top:243px"><span style="display:inline-block;transform-origin:left center;transform:scaleX(0.9483)">Used sectors map</span></div>
<div class="sep" style="left:107px;top:268px;width:350px"></div>
<div class="mi" style="left:111px;top:272px"><span style="display:inline-block;transform-origin:left center;transform:scaleX(0.9653)">Parallel source browsing</span></div>
<div class="sep" style="left:107px;top:297px;width:350px"></div>
<div class="mi" style="left:111px;top:301px"><span style="display:inline-block;transform-origin:left center;transform:scaleX(1.0211)">Add virtual partition</span></div>
<div class="a " style="left:79px;top:323px;width:28px;height:22px;background:#91b0fb"></div>
<div class="a " style="left:107px;top:323px;width:350px;height:22px;background:#92dafc"></div>
<div class="mi" style="left:111px;top:323px"><span style="display:inline-block;transform-origin:left center;transform:scaleX(0.9327)">Data analysis</span></div>
<svg class="a" style="left:443px;top:330px" width="6" height="8"><path d="M0.800 0.500L4.300 4L0.800 7.500" fill="none" stroke="#404040" stroke-width="1.200"/></svg>
<div class="sep" style="left:107px;top:348px;width:350px"></div>
<div class="mi" style="left:111px;top:352px"><span style="display:inline-block;transform-origin:left center;transform:scaleX(0.9196)">Export</span></div>
<svg class="a" style="left:443px;top:359px" width="6" height="8"><path d="M0.800 0.500L4.300 4L0.800 7.500" fill="none" stroke="#404040" stroke-width="1.200"/></svg>
<div class="sep" style="left:107px;top:377px;width:350px"></div>
<div class="mi" style="left:111px;top:381px"><span style="display:inline-block;transform-origin:left center;transform:scaleX(0.9461)">Change sector size</span></div>
<div class="mi" style="left:111px;top:403px"><span style="display:inline-block;transform-origin:left center;transform:scaleX(0.9642)">Conversion sector (520-&gt;512)</span></div>
<div class="sep" style="left:107px;top:428px;width:350px"></div>
<div class="mi" style="left:111px;top:432px"><span style="display:inline-block;transform-origin:left center;transform:scaleX(1.0239)">Mount drive</span></div>
<div class="sep" style="left:107px;top:457px;width:350px"></div>
<div class="mi" style="left:111px;top:461px"><span style="display:inline-block;transform-origin:left center;transform:scaleX(0.9894)">Finding the definitive versions of RAID-blocks</span></div>
<div class="mi" style="right:1108.5px;top:461px"><span style="display:inline-block;transform-origin:right center;transform:scaleX(0.8459)">F12</span></div>
<div class="a" style="left:454px;top:320px;width:244px;height:94px;background:#fff;border:1px solid #dcd8a8"></div>
<div class="mi" style="left:489px;top:323px"><span style="display:inline-block;transform-origin:left center;transform:scaleX(0.9623)">Quick disk&nbsp; analysis</span></div>
<div class="mi" style="left:489px;top:345px"><span style="display:inline-block;transform-origin:left center;transform:scaleX(0.8789)">GREP search</span></div>
<div class="a " style="left:457px;top:367px;width:28px;height:22px;background:#91b0fb"></div>
<div class="a " style="left:485px;top:367px;width:210px;height:22px;background:#92dafc"></div>
<svg class="a" style="left:681px;top:374px" width="6" height="8"><path d="M0.800 0.500L4.300 4L0.800 7.500" fill="none" stroke="#404040" stroke-width="1.200"/></svg>
<div class="mi" style="left:489px;top:367px"><span style="display:inline-block;transform-origin:left center;transform:scaleX(0.9447)">Raw recovery</span></div>
<div class="mi" style="left:489px;top:389px"><span style="display:inline-block;transform-origin:left center;transform:scaleX(0.9596)">Search file systems structures</span></div>
<svg class="a" style="left:527px;top:377px" width="13" height="19" viewBox="0 0 13 19"><path d="M0.500 1V16L4 12.800L6.500 17.800L8.800 16.800L6.500 12H11.500Z" fill="#fff" stroke="#000"/></svg>
</body></html>
